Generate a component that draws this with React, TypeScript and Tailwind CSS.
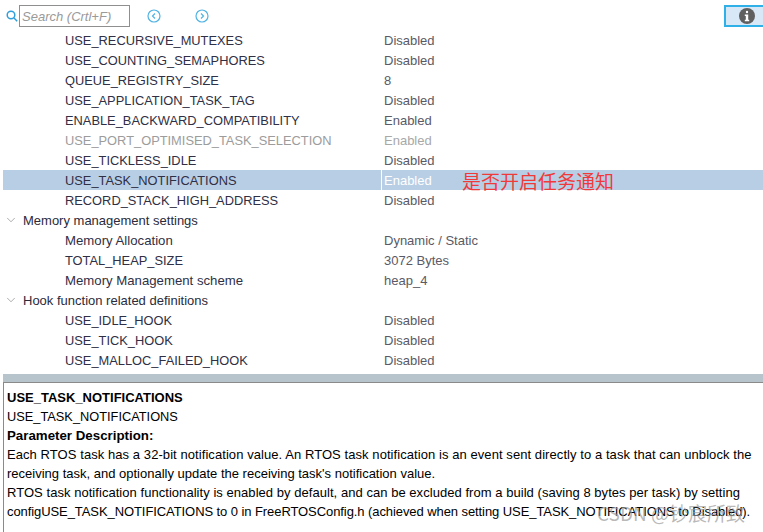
import { ChevronDown } from 'lucide-react';

const FONT = "font-['Liberation_Sans',Arial,sans-serif]";

type Row =
  | { group: string }
  | { name: string; value: string; selected?: boolean; muted?: boolean; mixed?: boolean };

const rows: Row[] = [
  { name: 'USE_RECURSIVE_MUTEXES', value: 'Disabled' },
  { name: 'USE_COUNTING_SEMAPHORES', value: 'Disabled' },
  { name: 'QUEUE_REGISTRY_SIZE', value: '8' },
  { name: 'USE_APPLICATION_TASK_TAG', value: 'Disabled' },
  { name: 'ENABLE_BACKWARD_COMPATIBILITY', value: 'Enabled' },
  { name: 'USE_PORT_OPTIMISED_TASK_SELECTION', value: 'Enabled', muted: true },
  { name: 'USE_TICKLESS_IDLE', value: 'Disabled' },
  { name: 'USE_TASK_NOTIFICATIONS', value: 'Enabled', selected: true },
  { name: 'RECORD_STACK_HIGH_ADDRESS', value: 'Disabled' },
  { group: 'Memory management settings' },
  { name: 'Memory Allocation', value: 'Dynamic / Static', mixed: true },
  { name: 'TOTAL_HEAP_SIZE', value: '3072 Bytes' },
  { name: 'Memory Management scheme', value: 'heap_4', mixed: true },
  { group: 'Hook function related definitions' },
  { name: 'USE_IDLE_HOOK', value: 'Disabled' },
  { name: 'USE_TICK_HOOK', value: 'Disabled' },
  { name: 'USE_MALLOC_FAILED_HOOK', value: 'Disabled' },
];

function CircleArrow({ right }: { right?: boolean }) {
  return (
    <svg width="14" height="14" viewBox="0 0 14 14" fill="none" stroke="#4fb3e3" strokeWidth="1.2">
      <circle cx="7" cy="7" r="6" />
      <path d={right ? 'M6 4.5 8.5 7 6 9.5' : 'M8 4.5 5.5 7 8 9.5'} />
    </svg>
  );
}

export default function App() {
  return (
    <div className={`relative h-[532px] w-[763px] overflow-hidden bg-white text-[13px] ${FONT}`}>
      {/* Toolbar */}
      <div className="flex h-[30px] items-start pt-[5px]">
        <svg className="ml-[6px] mt-[5px]" width="12" height="12" viewBox="0 0 12 12" fill="none" stroke="#2f9fdc" strokeWidth="1.5">
          <circle cx="5" cy="5" r="3.8" />
          <path d="M8 8l3.2 3.2" />
        </svg>
        <div className="ml-[1px] flex h-[22px] w-[111px] items-center border border-[#8f8f8f] pl-[2px] pt-[1px] italic text-[#9a9a9a]">
          Search (Crtl+F)
        </div>
        <div className="ml-[17px] mt-[4px]">
          <CircleArrow />
        </div>
        <div className="ml-[34px] mt-[4px]">
          <CircleArrow right />
        </div>
        <div className="ml-auto flex h-[22px] w-[39px] items-center border-2 border-r-0 border-[#2fb0e6] bg-[#d9e8f6] pl-[13px]">
          <svg width="16" height="16" viewBox="0 0 16 16">
            <circle cx="8" cy="8" r="8" fill="#5f5f5f" />
            <rect x="6.8" y="2.8" width="2.4" height="2.4" rx="1.2" fill="#fff" />
            <path d="M5.8 6.6h3.4v5.2h1v1.4H5.8v-1.4h1V8h-1z" fill="#fff" />
          </svg>
        </div>
      </div>

      {/* Parameter tree */}
      <div className="flex flex-col">
        {rows.map((row, i) =>
          'group' in row ? (
            <div key={i} className="flex h-[20px] items-center text-[#2b2b3a]">
              <ChevronDown size={14} strokeWidth={1} className="ml-[4px] mr-[5px] text-[#707070]" />
              <span className="pt-[2px]">{row.group}</span>
            </div>
          ) : (
            <div
              key={i}
              className={`ml-[3px] flex h-[20px] items-center ${row.selected ? 'bg-[#b8cee4]' : ''}`}
            >
              <div
                className={`w-[378px] pl-[62px] pt-[2px] ${row.mixed ? 'text-[13.2px]' : 'text-[12.85px]'} ${
                  row.muted ? 'text-[#9c9c9c]' : 'text-[#2f2f45]'
                }`}
              >
                {row.name}
              </div>
              <div
                className={`flex h-full w-[81px] shrink-0 items-center whitespace-nowrap border-l pl-[2px] pt-[2px] ${
                  row.selected
                    ? 'border-white text-white'
                    : row.muted
                      ? 'border-transparent text-[#a8a8a8]'
                      : 'border-transparent text-[#5a5a66]'
                }`}
              >
                {row.value}
              </div>
              {row.selected && (
                <span className="font-['Noto_Sans_CJK_SC',sans-serif] text-[19px] leading-none text-[#f03a3a]">
                  是否开启任务通知
                </span>
              )}
            </div>
          ),
        )}
      </div>

      {/* Splitter */}
      <div className="ml-[3px] mt-[4px] h-[8px] bg-[#b8c4cc]" />

      {/* Description */}
      <div className="ml-[3px] h-[150px] border-l border-t border-[#8a8a8a] pl-[3px] pt-[5px] leading-[19px] text-black">
        <div className="font-bold">USE_TASK_NOTIFICATIONS</div>
        <div className="text-[12.8px]">USE_TASK_NOTIFICATIONS</div>
        <div className="text-[13.3px] font-bold">Parameter Description:</div>
        <div className="tracking-[0.07px]">Each RTOS task has a 32-bit notification value. An RTOS task notification is an event sent directly to a task that can unblock the</div>
        <div>receiving task, and optionally update the receiving task's notification value.</div>
        <div className="tracking-[0.045px]">RTOS task notification functionality is enabled by default, and can be excluded from a build (saving 8 bytes per task) by setting</div>
        <div className="tracking-[-0.08px]">configUSE_TASK_NOTIFICATIONS to 0 in FreeRTOSConfig.h (achieved when setting USE_TASK_NOTIFICATIONS to Disabled).</div>
      </div>

      {/* Watermark */}
      <div className="absolute left-[597px] top-[502px] font-['Noto_Sans_CJK_SC',sans-serif] text-[19px] leading-[22px] text-[#9a9a9a]/70">
        CSDN @钞宸所致
      </div>
    </div>
  );
}
